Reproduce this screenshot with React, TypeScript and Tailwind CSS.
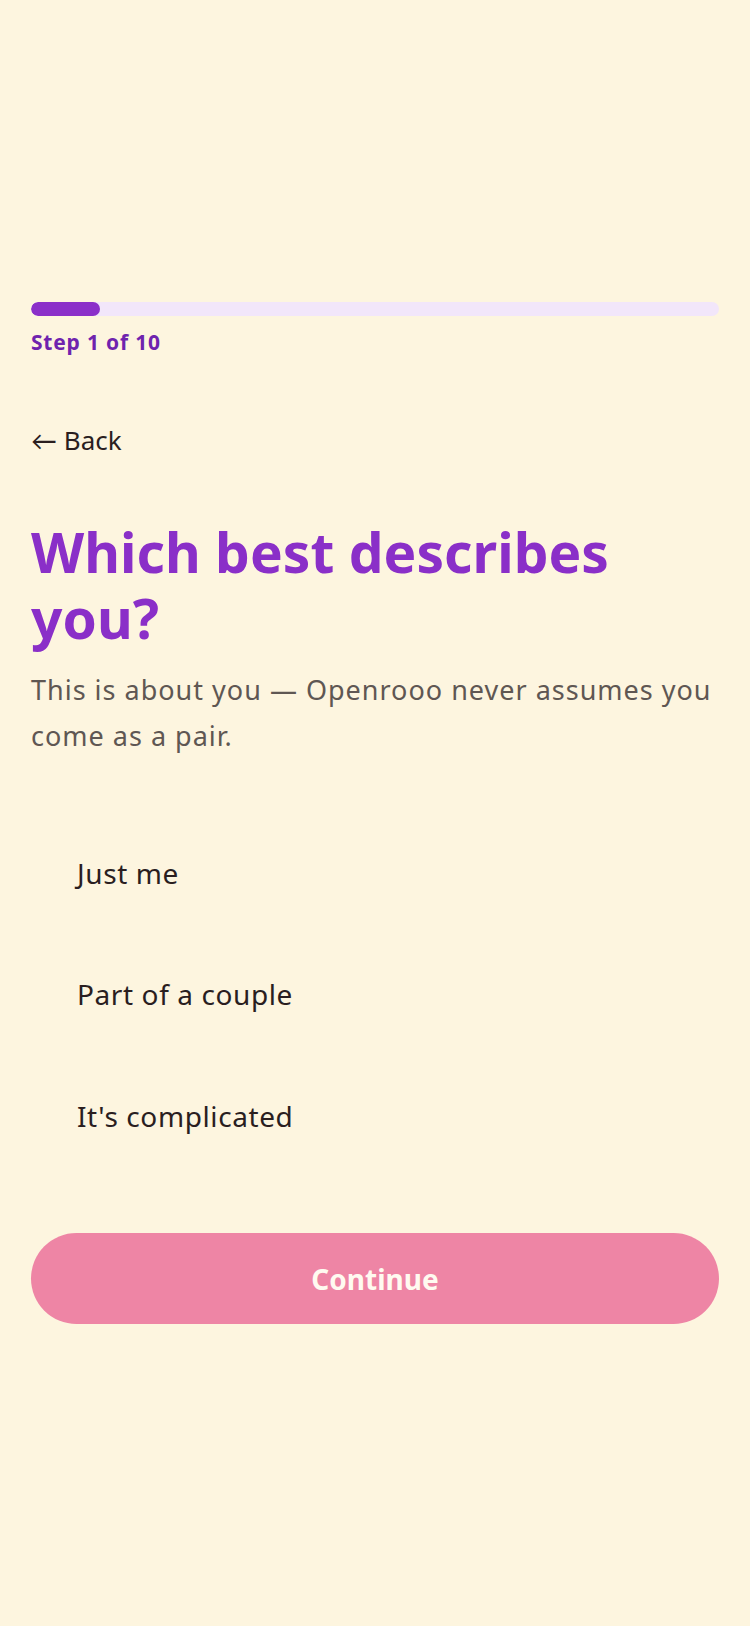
import React, { useState } from 'react';

const options = ['Just me', 'Part of a couple', "It's complicated"];

const App: React.FC = () => {
  const [selected, setSelected] = useState<string | null>(null);
  const step = 1;
  const total = 10;

  return (
    <div className="min-h-[1626px] w-full bg-[#fdf5df] font-['Noto_Sans','Open_Sans',sans-serif]">
      <div className="px-[31px] pt-[302px]">
        <div className="h-[14px] w-full overflow-hidden rounded-full bg-[#f2e6fa]">
          <div className="h-full rounded-full bg-[#8b2fc9]" style={{ width: `${(step / total) * 100}%` }} />
        </div>
        <div className="mt-[12px] text-[21px] font-bold leading-[28px] tracking-[0.8px] text-[#6f23ae]">
          Step {step} of {total}
        </div>

        <button className="mt-[66px] block text-[26px] leading-[36px] text-[#2a1e1f]">
          <span className="font-['Lato',sans-serif]">←</span> Back
        </button>

        <h1 className="mt-[61px] text-[55px] font-bold leading-[66px] tracking-[0.05px] text-[#8a2fc8]">
          Which best describes you?
        </h1>
        <p className="mt-[16px] text-[27px] leading-[46px] tracking-[1px] text-[#5f5753]">
          This is about you — Openrooo never assumes you come as a pair.
        </p>

        <div className="mt-[53px] flex flex-col">
          {options.map((o) => (
            <button
              key={o}
              onClick={() => setSelected(o)}
              className="flex h-[121.5px] items-center pl-[46px] text-left text-[28px] leading-[40px] tracking-[0.6px] text-[#2a1e1f]"
            >
              {o}
            </button>
          ))}
        </div>

        <button
          disabled={!selected}
          className="mt-[56.5px] flex h-[91px] w-full items-center justify-center rounded-full bg-[#ee85a5] text-[28px] font-bold text-[#fffaf0]"
        >
          Continue
        </button>
      </div>
    </div>
  );
};

export default App;
